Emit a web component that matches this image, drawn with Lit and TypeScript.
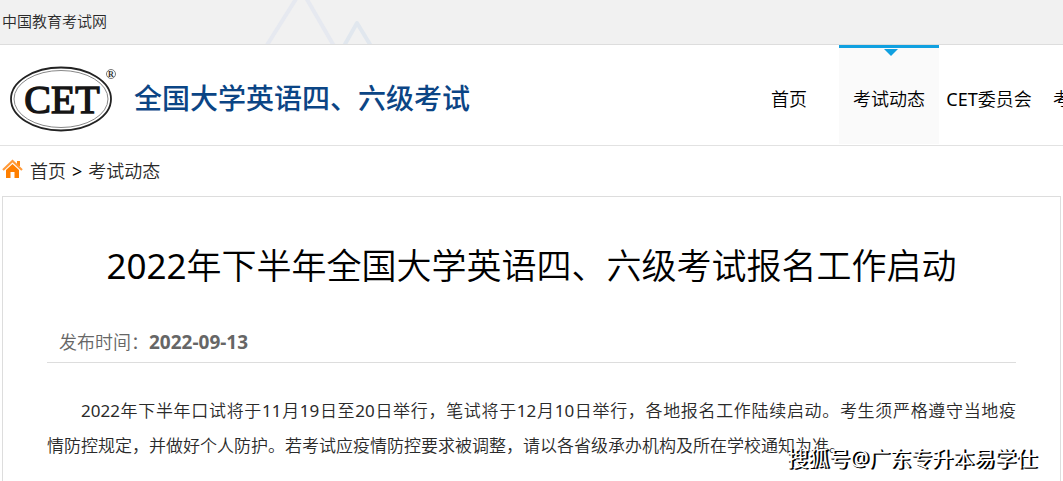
import { LitElement, html, css } from "lit";
import { customElement } from "lit/decorators.js";
import { classMap } from "lit/directives/class-map.js";

const NAV = [
  { label: "首页", active: false },
  { label: "考试动态", active: true },
  { label: "CET委员会", active: false },
  { label: "考试介绍", active: false },
];

@customElement("app-root")
export class AppRoot extends LitElement {
  static styles = css`
    :host {
      display: flex;
      flex-direction: column;
      min-height: 100vh;
      overflow: hidden;
      position: relative;
      background: #fff;
      color: #2a2a2a;
      font: 350 18px/24px "Noto Sans", "Noto Sans CJK SC", sans-serif;
    }
    a {
      color: inherit;
      text-decoration: none;
    }
    .topbar {
      display: flex;
      height: 44px;
      background: #f1f1f1;
      border-bottom: 1px solid #ddd;
      font-size: 15px;
    }
    .topbar a {
      flex: 0 0 262px;
      box-sizing: border-box;
      padding: 9px 2px;
    }
    .peaks {
      width: 120px;
      height: 44px;
    }
    .header {
      display: flex;
      justify-content: space-between;
      height: 100px;
      border-bottom: 1px solid #e2e2e2;
    }
    .brand {
      display: flex;
      align-items: center;
      gap: 14px;
      padding: 6px 0 0 8px;
      white-space: nowrap;
    }
    .emblem {
      width: 112px;
      height: 72px;
    }
    .brand-name {
      color: #0b4585;
      font-size: 28px;
      line-height: 40px;
      font-weight: 500;
    }
    .nav {
      display: flex;
      flex: 0 0 324px;
      overflow: hidden;
      color: #000;
    }
    .tab {
      flex: 0 0 100px;
      box-sizing: border-box;
      height: 99px;
      border-top: 3px solid transparent;
      padding-top: 39px;
      text-align: center;
      white-space: nowrap;
      position: relative;
    }
    .tab.active {
      background: #fafafa;
      border-top-color: #10a0e0;
    }
    .tab.active::before {
      content: "";
      position: absolute;
      top: 1px;
      left: 45px;
      border: 7px solid transparent;
      border-top-color: #10a0e0;
      border-bottom: 0;
    }
    .crumbs {
      display: flex;
      align-items: center;
      gap: 6px;
      height: 50px;
      padding-left: 2px;
    }
    .home {
      width: 22px;
      height: 20px;
      margin-top: -4px;
    }
    .sep {
      color: #000;
      font-weight: 400;
    }
    .card {
      flex: 1;
      margin: 0 2px;
      border: 1px solid #ddd;
      border-bottom: 0;
      padding: 44px 44px 0;
    }
    h1 {
      margin: 0;
      color: #000;
      font-size: 35px;
      line-height: 50px;
      font-weight: 350;
      text-align: center;
    }
    .num {
      font-weight: 400;
    }
    .meta {
      margin-top: 39px;
      padding: 0 12px 8px;
      border-bottom: 1px solid #ddd;
      color: #666;
    }
    .meta strong {
      font-size: 19px;
      font-weight: 700;
    }
    .body {
      margin: 30px 0 0;
      font-size: 17px;
      line-height: 35px;
      text-indent: 2em;
      text-align: justify;
    }
    .phrase {
      white-space: nowrap;
    }
    .watermark {
      position: absolute;
      right: 26px;
      bottom: 8px;
      color: #fff;
      font-size: 21px;
      line-height: 30px;
      font-weight: 400;
      text-shadow: 1px 1px 0 #000, 2px 1px 0 #000;
    }
  `;

  /* Latin letters and digits are set one weight heavier than the Chinese text. */
  private mixed(text: string) {
    return text
      .split(/([A-Za-z0-9]+)/)
      .map((part) => (/^[A-Za-z0-9]/.test(part) ? html`<span class="num">${part}</span>` : part));
  }

  render() {
    return html`
      <div class="topbar" lang="zh-CN">
        <a href="#">中国教育考试网</a>
        <svg class="peaks" viewBox="0 0 120 44" fill="none" stroke="#e6e9f0" stroke-width="4" aria-hidden="true">
          <path d="M5 45 34 -1M43 -4 72 46" />
          <path d="M82 46 95 23 109 46" stroke="#e1e7ee" stroke-linejoin="round" />
        </svg>
      </div>
      <header class="header" lang="zh-CN">
        <a class="brand" href="#">
          <svg class="emblem" viewBox="0 0 112 72" role="img" aria-label="CET">
            <ellipse cx="53" cy="37" rx="50" ry="31.500" fill="#fff" stroke="#222" stroke-width="1.800" />
            <ellipse cx="53" cy="37" rx="47" ry="28.500" fill="none" stroke="#888" stroke-width="1" />
            <text x="54" y="51" text-anchor="middle" font-family="Liberation Serif, serif" font-size="40" font-weight="400" fill="#151515" stroke="#151515" stroke-width="1.400">CET</text>
            <circle cx="103" cy="12" r="4.500" fill="none" stroke="#777" />
            <text x="103" y="15" text-anchor="middle" font-family="Liberation Serif, serif" font-size="8" font-weight="700" fill="#333">R</text>
          </svg>
          <span class="brand-name">全国大学英语四、六级考试</span>
        </a>
        <nav class="nav">
          ${NAV.map(
            (item) => html`<a href="#" class=${classMap({ tab: true, active: item.active })}>${this.mixed(item.label)}</a>`
          )}
        </nav>
      </header>
      <nav class="crumbs" lang="zh-CN">
        <svg class="home" viewBox="0 0 22 20" aria-hidden="true">
          <path d="M15 2h3v5h-3z" fill="#ff8a14" />
          <path d="M1 11 10.500 2 20 11" fill="none" stroke="#ff9a3a" stroke-width="2.200" />
          <path d="M4 11 10.500 5 17 11V19H12.500V13H8.500V19H4Z" fill="#ff7f00" />
        </svg>
        <a href="#">首页</a>
        <span class="sep">&gt;</span>
        <a href="#">考试动态</a>
      </nav>
      <article class="card" lang="zh-CN">
        <h1>${this.mixed("2022年下半年全国大学英语四、六级考试报名工作启动")}</h1>
        <div class="meta">发布时间：<strong>2022-09-13</strong></div>
        <p class="body">${this.mixed("2022年下半年口试将于11月19日至20日举行，笔试将于12月10日举行，各地报名工作陆续启动。考生须严格遵守当地疫")}<span class="phrase">情防控规定，</span>并做好个人防护。若考试应疫情防控要求被调整，请以各省级承办机构及所在学校通知为准。</p>
      </article>
      <div class="watermark" lang="zh-CN">搜狐号@广东专升本易学仕</div>
    `;
  }
}
